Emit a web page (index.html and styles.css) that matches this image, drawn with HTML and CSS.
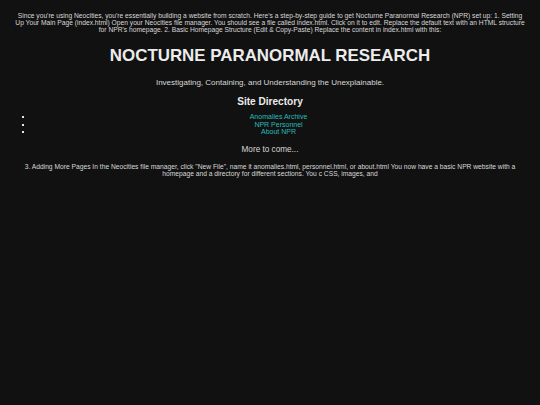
FILE: index.html
```html
<!DOCTYPE html>
<html lang="en">
<head>
<meta charset="utf-8">
<title>Nocturne Paranormal Research</title>
<link rel="stylesheet" href="styles.css">
</head>
<body>
<div class="page">
  <p class="intro">Since you're using Neocities, you're essentially building a website from scratch. Here's a step-by-step guide to get Nocturne Paranormal Research (NPR) set up: 1. Setting Up Your Main Page (index.html) Open your Neocities file manager. You should see a file called index.html. Click on it to edit. Replace the default text with an HTML structure for NPR's homepage. 2. Basic Homepage Structure (Edit &amp; Copy-Paste) Replace the content in index.html with this:</p>
  <h1 class="title">NOCTURNE PARANORMAL RESEARCH</h1>
  <p class="tagline">Investigating, Containing, and Understanding the Unexplainable.</p>
  <h2 class="section-title">Site Directory</h2>
  <ul class="directory">
    <li><a href="#">Anomalies Archive</a></li>
    <li><a href="#">NPR Personnel</a></li>
    <li><a href="#">About NPR</a></li>
  </ul>
  <p class="more">More to come...</p>
  <p class="outro">3. Adding More Pages In the Neocities file manager, click "New File", name it anomalies.html, personnel.html, or about.html You now have a basic NPR website with a homepage and a directory for different sections. You c CSS, images, and</p>
</div>
</body>
</html>
```
FILE: styles.css
```css
html, body {
  margin: 0;
  padding: 0;
  background: #111111;
}
body {
  color: #d8d8d8;
  font-family: "Liberation Sans", Arial, sans-serif;
}
.page {
  padding: 12px 14px 0;
  text-align: center;
}
.intro {
  margin: 0;
  font-size: 6.7px;
  line-height: 7px;
}
.title {
  margin: 14px 0 0;
  font-size: 16.9px;
  line-height: 18px;
  font-weight: bold;
  color: #ececec;
}
.tagline {
  margin: 13px 0 0;
  font-size: 8px;
  line-height: 9px;
}
.section-title {
  margin: 9px 0 0;
  font-size: 10.1px;
  line-height: 11px;
  font-weight: bold;
  color: #ececec;
}
.directory {
  margin: 6px 2px 0 0;
  padding-left: 19px;
  font-size: 7px;
  line-height: 7.5px;
  list-style-type: square;
}
.directory li::marker {
  color: #e6e6e6;
}
.directory a {
  color: #2bbaba;
  text-decoration: none;
}
.more {
  margin: 9.75px 0 0;
  font-size: 8.2px;
  line-height: 9px;
}
.outro {
  margin: 8.25px 0 0;
  font-size: 6.7px;
  line-height: 7.5px;
}
```
